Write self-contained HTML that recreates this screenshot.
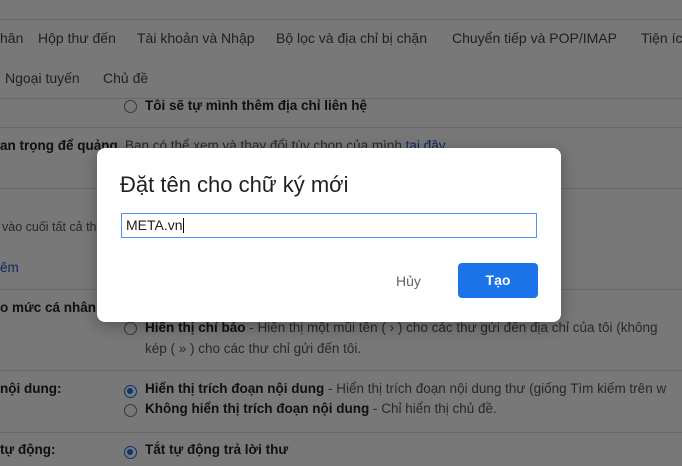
<!DOCTYPE html>
<html><head><meta charset="utf-8"><style>
*{margin:0;padding:0;box-sizing:border-box}
body{width:682px;height:466px;overflow:hidden;background:#fff;font-family:"Liberation Sans",Arial,sans-serif;position:relative;color:#222}
.a{position:absolute;white-space:nowrap}
.l{position:absolute;left:0;width:682px;height:1px;background:#e0e0e0}
.tab{font-size:14px;color:#444;top:30px}
.b{font-weight:bold;font-size:13.5px;color:#222}
.t{font-size:13.5px;color:#222}
.g{color:#555}
.r{position:absolute;width:13px;height:13px;border:1.5px solid #777;border-radius:50%}
.r.on{border-color:#1a73e8}
.r.on:after{content:"";position:absolute;left:2px;top:2px;width:6px;height:6px;border-radius:50%;background:#1a73e8}
#ov{position:absolute;inset:0;background:rgba(0,0,0,0.53)}
#dlg{position:absolute;left:97px;top:148px;width:464px;height:174px;background:#fff;border-radius:8px;box-shadow:0 4px 16px rgba(0,0,0,.3)}
</style></head><body>
<div class="l" style="top:19px"></div>
<div class="a tab" style="left:0">hân</div>
<div class="a tab" style="left:38px">Hộp thư đến</div>
<div class="a tab" style="left:137px">Tài khoản và Nhập</div>
<div class="a tab" style="left:276px">Bộ lọc và địa chỉ bị chặn</div>
<div class="a tab" style="left:452px">Chuyển tiếp và POP/IMAP</div>
<div class="a tab" style="left:641px">Tiện ích</div>
<div class="a tab" style="left:5px;top:70px">Ngoại tuyến</div>
<div class="a tab" style="left:103px;top:70px">Chủ đề</div>
<div class="l" style="top:98px"></div>
<div class="r" style="left:124px;top:100px"></div>
<div class="a b" style="left:145px;top:98px">Tôi sẽ tự mình thêm địa chỉ liên hệ</div>
<div class="l" style="top:127px"></div>
<div class="a b" style="left:0;top:138px">an trọng để quảng</div>
<div class="a t g" style="left:125px;top:138px">Bạn có thể xem và thay đổi tùy chọn của mình <span style="color:#1a55c8">tại đây</span></div>
<div class="l" style="top:188px"></div>
<div class="a t g" style="left:2px;top:220px;font-size:12.5px">vào cuối tất cả thư</div>
<div class="a t" style="left:0;top:260px;color:#1a55c8">êm</div>
<div class="l" style="top:289px"></div>
<div class="a b" style="left:0;top:300px">o mức cá nhân:</div>
<div class="r" style="left:124px;top:322px"></div>
<div class="a t" style="left:145px;top:320px"><b>Hiển thị chỉ báo</b> <span class="g">- Hiển thị một mũi tên ( › ) cho các thư gửi đến địa chỉ của tôi (không</span></div>
<div class="a t g" style="left:145px;top:341px">kép ( » ) cho các thư chỉ gửi đến tôi.</div>
<div class="l" style="top:370px"></div>
<div class="a b" style="left:0;top:381px">nội dung:</div>
<div class="r on" style="left:124px;top:385px"></div>
<div class="a t" style="left:145px;top:381px"><b>Hiển thị trích đoạn nội dung</b> <span class="g">- Hiển thị trích đoạn nội dung thư (giống Tìm kiếm trên w</span></div>
<div class="r" style="left:124px;top:404px"></div>
<div class="a t" style="left:145px;top:401px"><b>Không hiển thị trích đoạn nội dung</b> <span class="g">- Chỉ hiển thị chủ đề.</span></div>
<div class="l" style="top:432px"></div>
<div class="a b" style="left:0;top:442px">tự động:</div>
<div class="r on" style="left:124px;top:446px"></div>
<div class="a b" style="left:145px;top:442px">Tắt tự động trả lời thư</div>
<div id="ov"></div>
<div id="dlg">
<div class="a" style="left:23px;top:24px;font-size:22px;color:#202124">Đặt tên cho chữ ký mới</div>
<div class="a" style="left:24px;top:65px;width:416px;height:25px;border:1px solid #4d90fe;font-size:14px;padding:3px 4px;color:#222">META.vn<span style="display:inline-block;width:1px;height:15px;background:#000;vertical-align:-3px"></span></div>
<div class="a" style="left:299px;top:125px;font-size:14px;color:#5f6368">Hủy</div>
<div class="a" style="left:361px;top:115px;width:80px;height:35px;background:#1a73e8;border-radius:4px;color:#fff;font-size:14px;font-weight:bold;text-align:center;line-height:35px">Tạo</div>
</div>
</body></html>
